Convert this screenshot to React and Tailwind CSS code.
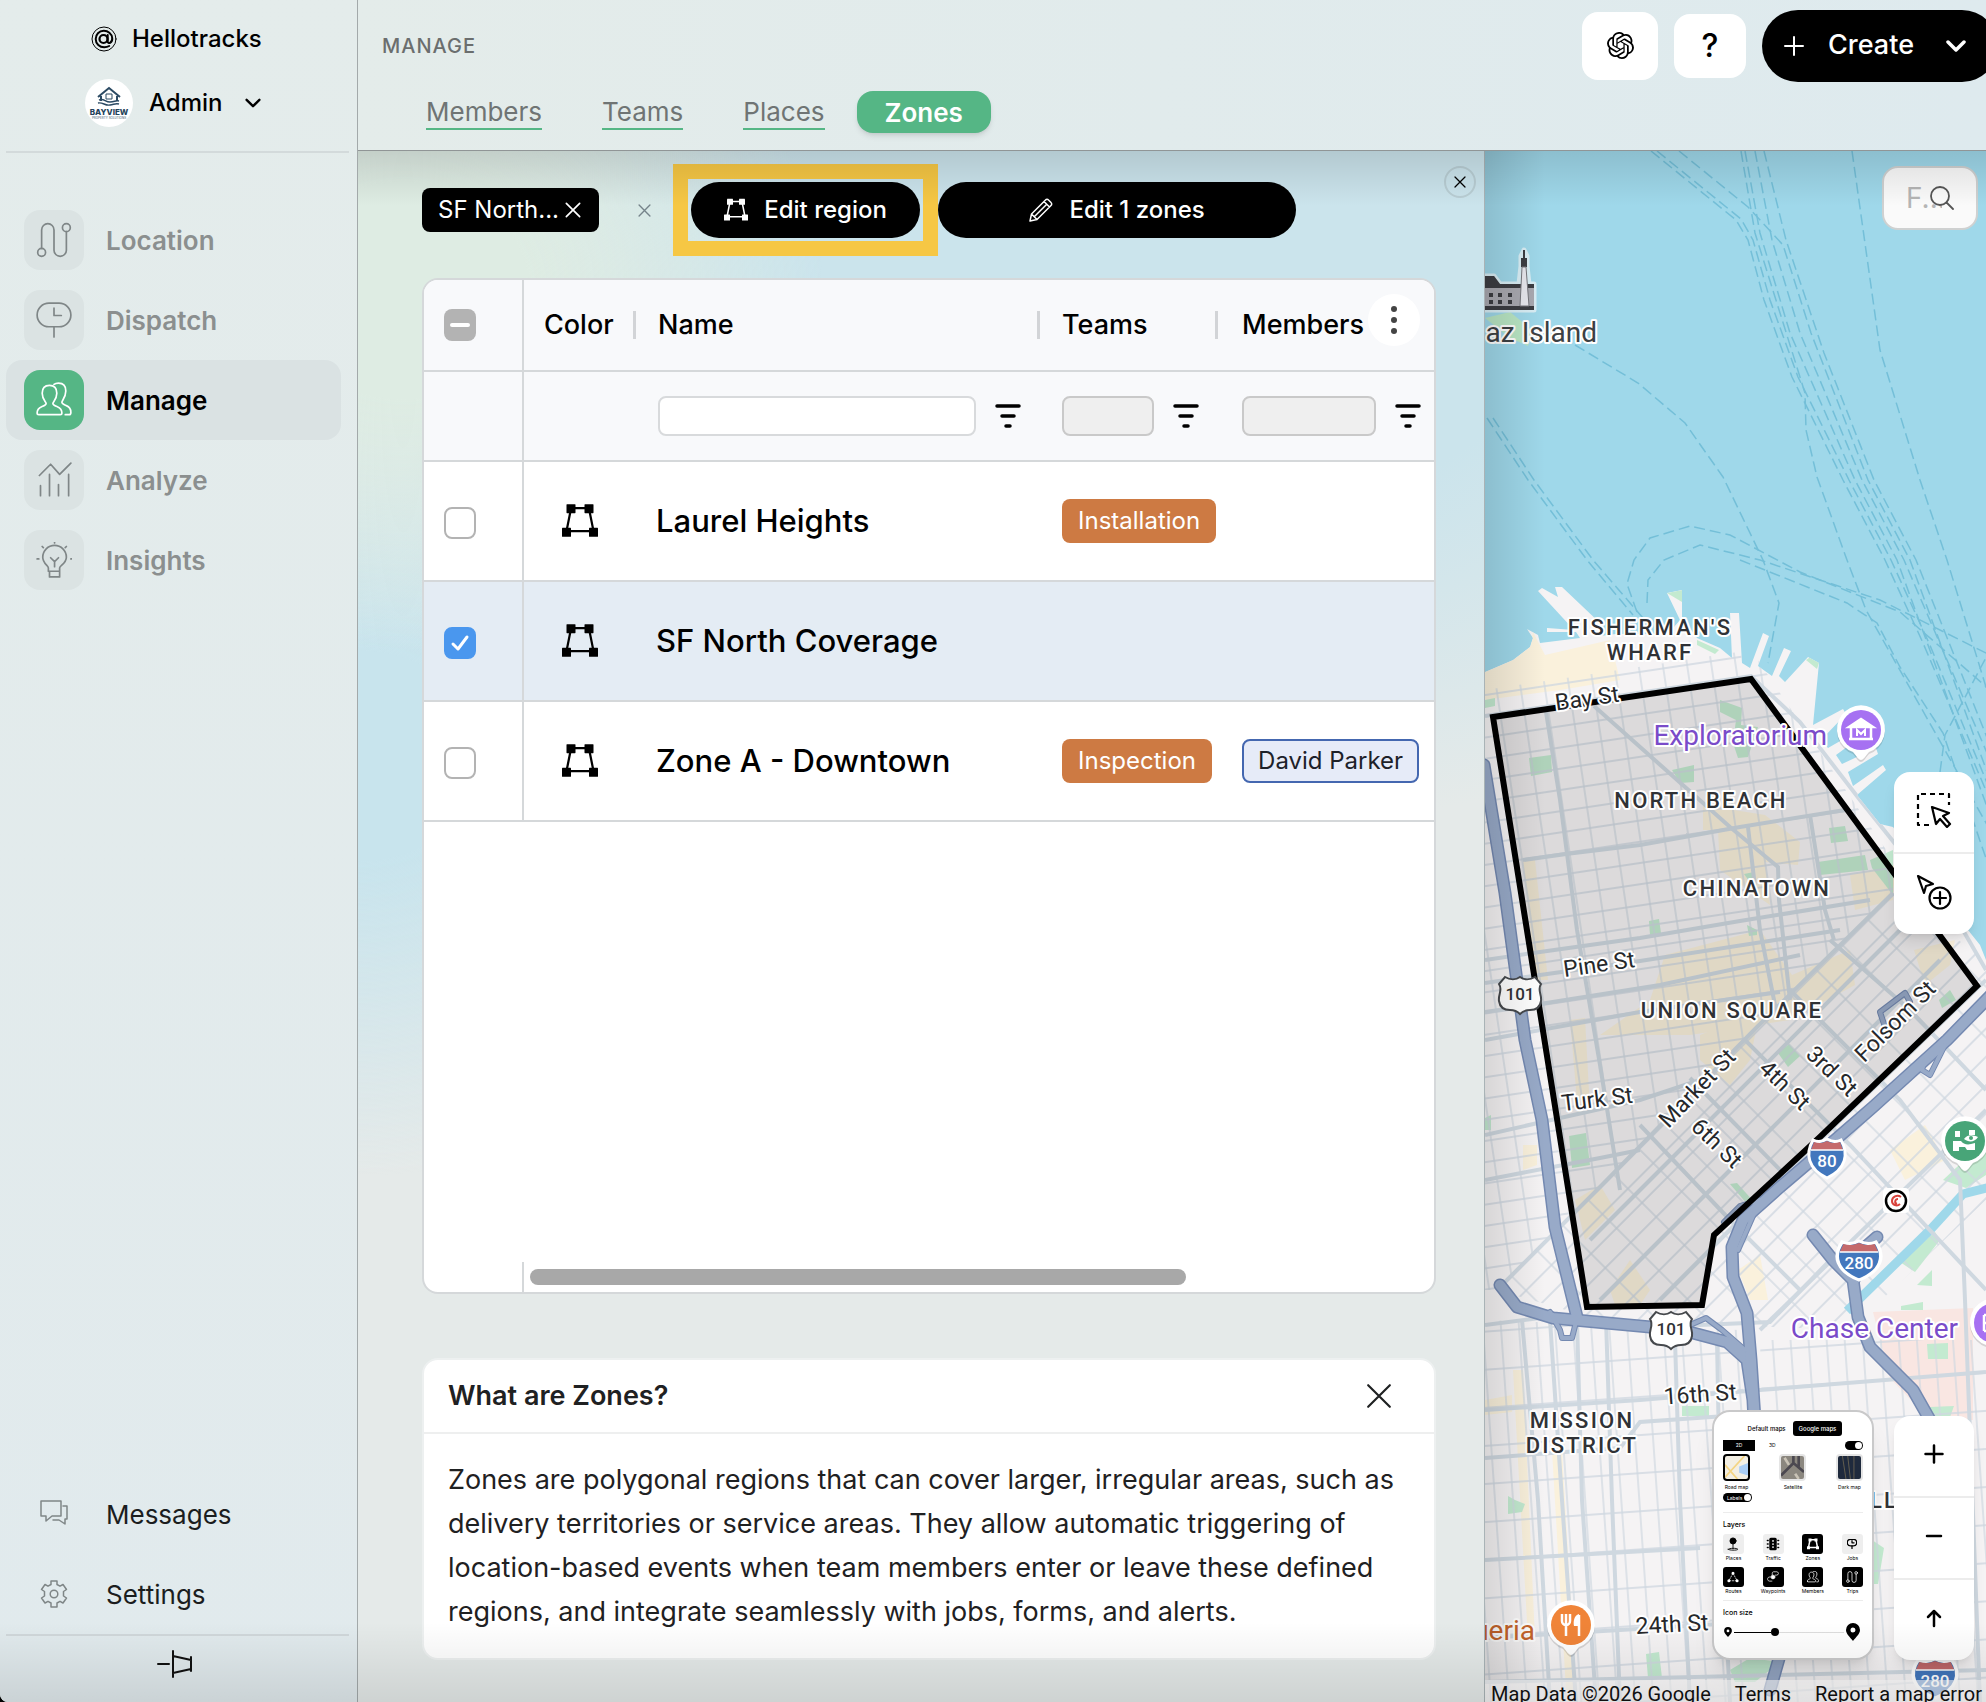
import { useState } from 'react'
import clsx from 'clsx'
import { SiOpenai } from 'react-icons/si'

const Icon = ({ children, className, viewBox = '0 0 32 32', width = 1.5 }) => (
  <svg
    viewBox={viewBox}
    className={className}
    fill="none"
    stroke="currentColor"
    strokeWidth={width}
    strokeLinecap="round"
    strokeLinejoin="round"
    aria-hidden="true"
  >
    {children}
  </svg>
)

const LocationIcon = ({ className = 'size-9', width = 1.5 }) => (
  <Icon className={className} width={width}>
    <circle cx="5" cy="27" r="3.5" />
    <circle cx="27" cy="5" r="3.5" />
    <path d="M5 23.500V7a5.500 5.500 0 0 1 11 0v18a5.500 5.500 0 0 0 11 0V8.500" />
  </Icon>
)

const DispatchIcon = ({ className = 'size-9', width = 1.5 }) => (
  <Icon className={className} width={width}>
    <rect x="1" y="1" width="30" height="21" rx="10.5" />
    <path d="M16 5.500V12h6.500M16 22v9" />
  </Icon>
)

const MembersIcon = ({ className = 'size-9', width = 1.5 }) => (
  <Icon className={className} width={width}>
    <path d="M1 27.500c0-3.500 1.500-4.500 4-5.500s4-1.500 4-3c0-1.400-3.500-3.500-3.500-9C5.500 5.500 8 3 12 3s6.500 2.500 6.500 7c0 5.500-3.500 7.600-3.500 9 0 1.500 1.500 2 4 3s4 2 4 5.500c0 1-.6 1.500-1.500 1.500h-19c-.9 0-1.500-.5-1.500-1.500z" />
    <path d="M16 2.200C17 1.300 18.400 1 20 1c4 0 6.500 2.500 6.500 7 0 5.500-3.500 8.600-3.500 10 0 1.500 1.500 2 4 3s4 2.500 4 6c0 1.200-.6 2-1.500 2H26" />
  </Icon>
)

const AnalyzeIcon = () => (
  <Icon className="size-9">
    <path d="M3 12l10-10 8 9L31 1M4 30V21M12 30V11M20 30V20M29 30V11" />
  </Icon>
)

const InsightsIcon = () => (
  <Icon className="size-9">
    <path d="M11 26v-3c0-2-5-4-5-9.500a10.500 10.500 0 0 1 21 0C27 19 21 21 21 23v3zM12 26v5h9v-5M16.500 22v-5M13 14l3.500 3.500L20 14" />
    <path d="M16.500 0v.8M1 15h1.500M31 15h.8M5.500 4l1 1M27 4l-1 1" />
  </Icon>
)

const ZoneIcon = ({ className, width = 1.5 }) => (
  <Icon className={className} width={width}>
    <path d="M9 4.500h13M6 25h20M8 5L4 25M24 5l4 20" />
    <g fill="currentColor" stroke="none">
      <rect x="4" y="1" width="8" height="8" rx="0.5" />
      <rect x="20" y="1" width="8" height="8" rx="0.5" />
      <rect x="0" y="22" width="8" height="8" rx="0.5" />
      <rect x="24" y="22" width="8" height="8" rx="0.5" />
    </g>
  </Icon>
)

const CloseIcon = ({ className, width = 2 }) => (
  <Icon className={className} width={width} viewBox="0 0 24 24">
    <path d="M2 2l20 20M22 2L2 22" />
  </Icon>
)

const FilterIcon = () => (
  <Icon className="h-[26px] w-7" width={3.5} viewBox="0 0 28 26">
    <path d="M3 3h22M8 13h12M12 23h4" />
  </Icon>
)

const ChevronIcon = ({ className, width = 3 }) => (
  <Icon className={className} width={width} viewBox="0 0 20 12">
    <path d="M2 2l8 8 8-8" />
  </Icon>
)

const navItems = [
  { name: 'Location', icon: <LocationIcon /> },
  { name: 'Dispatch', icon: <DispatchIcon /> },
  { name: 'Manage', icon: <MembersIcon />, active: true },
  { name: 'Analyze', icon: <AnalyzeIcon /> },
  { name: 'Insights', icon: <InsightsIcon /> },
]

const Sidebar = () => (
  <aside className="flex w-[358px] shrink-0 flex-col border-r border-[#a3a9aa] bg-linear-to-b from-[#e4eceb] to-[#e1eaed]">
    <div className="flex h-[151px] shrink-0 flex-col">
      <a href="#home" className="mt-[19px] ml-[91px] flex h-10 items-center gap-[15px] text-2xl font-medium text-black">
        <Icon className="size-[26px]" viewBox="0 0 26 26" width={1}>
          <circle cx="13" cy="13" r="12" />
          <circle cx="12.500" cy="13" r="4" strokeWidth="2.200" />
          <path d="M16.700 9v6.500c0 3 5 1.500 4.500-3.500C20.700 7.500 17 4.700 12.700 4.800 8 5 4.700 8.500 4.700 13c0 5 4 8.300 8.500 8.300 2 0 3.500-.4 5-1.300" strokeWidth="2" />
        </Icon>
        Hellotracks
      </a>
      <button className="mt-5 ml-[85px] flex h-12 w-44 items-center text-2xl font-medium text-black">
        <span className="flex size-12 items-center justify-center rounded-full bg-white">
          <svg viewBox="0 0 48 48" className="size-12" aria-hidden="true">
            <path d="M13 18l11-9 11 9M16 17v5M32 17v5M24 10v-1" fill="none" stroke="#2b4a63" strokeWidth="2" />
            <path d="M21 15h6v5h-6z" fill="none" stroke="#2b4a63" />
            <path d="M14 21c5-2 6 2 11 2s5-2 9-1M13 24c5-1 7 3 12 2s6-2 9-1" fill="none" stroke="#2b4a63" strokeWidth="1.500" />
            <text x="24" y="36" textAnchor="middle" fontSize="8" fontWeight="800" fill="#24425a">BAYVIEW</text>
            <text x="24" y="40" textAnchor="middle" fontSize="3" fontWeight="500" fill="#5b7384">PROPERTY SOLUTIONS</text>
          </svg>
        </span>
        <span className="ml-4 grow text-left">Admin</span>
        <ChevronIcon className="h-[10px] w-4" />
      </button>
    </div>
    <hr className="mr-2 ml-1.5 border-t-2 border-[#d3dadb]" />

    <nav className="mt-[47px] mr-4 ml-1.5 flex flex-col">
      {navItems.map((item) => (
        <a
          key={item.name}
          href={`#${item.name.toLowerCase()}`}
          className={clsx(
            'flex h-20 items-center gap-[22px] rounded-2xl pl-[18px] text-[26px] font-semibold',
            item.active ? 'bg-[#dae2e3] text-black' : 'text-[#8b8f8f]'
          )}
        >
          <span
            className={clsx(
              'flex size-[60px] items-center justify-center rounded-2xl',
              item.active ? 'bg-[#55b685] text-white' : 'bg-[#dbe3e3] text-[#7f8687]'
            )}
          >
            {item.icon}
          </span>
          {item.name}
        </a>
      ))}
    </nav>

    <div className="mt-auto flex flex-col text-[26px] text-[#1b1d1e]">
      <a href="#messages" className="flex h-20 items-center gap-[38px] pl-10">
        <Icon className="size-7 text-[#7f8687]" viewBox="0 0 28 28">
          <path d="M1 1h20v15H12l-6 5v-5H1zM23 6h4v13h-2v5l-6-4h-6" />
        </Icon>
        Messages
      </a>
      <a href="#settings" className="flex h-20 items-center gap-[38px] pl-10">
        <Icon className="size-7 text-[#7f8687]" viewBox="0 0 28 28">
          <circle cx="14" cy="14" r="3.800" />
          <path d="M11 1h6v3.500l3 1.700 3-1.700 3.500 5-3 2v4.500l3 2-3.500 5-3-1.700-3 1.700V27h-6v-4l-3-1.700L5 23l-3.500-5 3-2v-4.500l-3-2 3.500-5 3 1.700 3-1.700z" />
        </Icon>
        Settings
      </a>
    </div>
    <hr className="mr-2 ml-1.5 border-t-2 border-[#d0d7da]" />
    <button aria-label="Pin sidebar" className="flex h-[66px] items-start justify-center pt-3.5 pr-2 text-[#111]">
      <Icon className="h-7 w-9" viewBox="0 0 36 28" width={2}>
        <path d="M1 14h11M16 1v26M16 6l18 4M16 23l18-4M34 7v14" />
      </Icon>
    </button>
  </aside>
)

const tabs = ['Members', 'Teams', 'Places']

const Header = () => (
  <header className="relative z-20 flex h-[151px] shrink-0 items-start justify-between border-b border-[#a3a9aa] bg-linear-to-r from-[#e4ecea] to-[#deeaee]">
    <div className="flex flex-col">
      <h1 className="mt-8 ml-6 h-7 text-xl leading-7 font-medium tracking-wider text-[#6b6e6e]">MANAGE</h1>
      <nav className="mt-[30px] ml-[68px] flex h-11 items-center text-[26px] text-[#6f7474]">
        {tabs.map((tab) => (
          <a key={tab} href={`#${tab.toLowerCase()}`} className="mt-0.5 mr-[60px] border-b-2 border-[#55b685] leading-8 last-of-type:mr-8">
            {tab}
          </a>
        ))}
        <button aria-current="page" className="h-[42px] rounded-2xl bg-[#55b685] px-7 font-semibold text-white shadow-md">
          Zones
        </button>
      </nav>
    </div>
    <div className="-mr-3 flex h-[91px] items-center gap-4">
      <button aria-label="Ask assistant" className="flex h-[68px] w-[76px] items-center justify-center rounded-2xl bg-white">
        <SiOpenai className="size-[27px]" />
      </button>
      <button aria-label="Help" className="h-16 w-[72px] rounded-2xl bg-white text-[32px] font-medium">
        ?
      </button>
      <button className="flex h-[72px] items-center rounded-full bg-black pr-8 pl-[22px] text-[27px] font-medium text-white">
        <Icon className="mr-6 size-5" viewBox="0 0 20 20" width={2}>
          <path d="M1 10h18M10 1v18" />
        </Icon>
        Create
        <ChevronIcon className="ml-8 h-3 w-5" width={3.5} />
      </button>
    </div>
    <div className="pointer-events-none absolute inset-x-0 top-full h-14 bg-linear-to-b from-black/12 to-transparent" />
  </header>
)

const rows = [
  { id: 1, name: 'Laurel Heights', team: 'Installation' },
  { id: 2, name: 'SF North Coverage' },
  { id: 3, name: 'Zone A - Downtown', team: 'Inspection', member: 'David Parker' },
]

const ZonesTable = () => {
  const [selected, setSelected] = useState([2])

  const toggle = (id) =>
    setSelected(selected.includes(id) ? selected.filter((s) => s !== id) : [...selected, id])

  return (
    <div className="flex min-h-0 grow flex-col overflow-hidden rounded-2xl border-2 border-[#d5d8da] bg-white">
      <table className="w-full table-fixed border-separate border-spacing-0 text-left">
        <colgroup>
          <col className="w-[100px]" />
          <col className="w-[112px]" />
          <col />
          <col className="w-[178px]" />
          <col className="w-[216px]" />
        </colgroup>
        <thead className="bg-[#f8f9fb] text-[27px]">
          <tr className="h-[92px]">
            <th className="border-r-2 border-b-2 border-[#d5d8da] pl-5">
              <span className="relative block size-8">
                <input
                  type="checkbox"
                  aria-label="Select all zones"
                  className="block size-8 appearance-none rounded-lg bg-[#b3b3b3]"
                />
                <span className="pointer-events-none absolute inset-x-1.5 top-3.5 h-1 rounded-full bg-white" />
              </span>
            </th>
            {['Color', 'Name', 'Teams'].map((title) => (
              <th key={title} className={clsx('border-b-2 border-[#d5d8da] font-medium', title === 'Color' ? 'pl-5' : 'pl-[22px]')}>
                <span className="flex items-center justify-between">
                  {title}
                  <span className="h-7 w-[3px] bg-[#d2d4d7]" />
                </span>
              </th>
            ))}
            <th className="relative border-b-2 border-[#d5d8da] pl-6 font-medium">
              Members
              <button
                aria-label="Column menu"
                className="absolute top-3.5 right-3.5 flex size-[52px] items-center justify-center rounded-full bg-white"
              >
                <svg viewBox="0 0 6 28" className="h-7 w-1.5" fill="#444" aria-hidden="true">
                  <circle cx="3" cy="3" r="3" />
                  <circle cx="3" cy="14" r="3" />
                  <circle cx="3" cy="25" r="3" />
                </svg>
              </button>
            </th>
          </tr>
          <tr className="h-[90px]">
            <td className="border-r-2 border-b-2 border-[#d5d8da]" />
            <td className="border-b-2 border-[#d5d8da]" />
            {['name', 'teams', 'members'].map((field) => (
              <td key={field} className={clsx('border-b-2 border-[#d5d8da]', field === 'members' ? 'pr-3 pl-6' : 'pr-[18px] pl-[22px]')}>
                <span className="flex items-center gap-[18px]">
                  <input
                    aria-label={`Filter by ${field}`}
                    disabled={field !== 'name'}
                    className="h-10 min-w-0 grow rounded-lg border-2 border-[#d8dadc] bg-white px-2 disabled:border-[#c9c9c9] disabled:bg-[#efefef]"
                  />
                  <button aria-label={`Filter options for ${field}`}>
                    <FilterIcon />
                  </button>
                </span>
              </td>
            ))}
          </tr>
        </thead>
        <tbody>
          {rows.map((row) => {
            const isSelected = selected.includes(row.id)
            return (
              <tr key={row.id} className={clsx('h-[120px]', isSelected && 'bg-[#e4ecf4]')}>
                <td className="border-r-2 border-b-2 border-[#d5d8da] pt-1 pl-5">
                  <span className="relative block size-8">
                    <input
                      type="checkbox"
                      aria-label={`Select ${row.name}`}
                      checked={isSelected}
                      onChange={() => toggle(row.id)}
                      className="block size-8 appearance-none rounded-lg border-2 border-[#b3b3b3] bg-white checked:border-[#4a97ee] checked:bg-[#4a97ee]"
                    />
                    {isSelected && (
                      <Icon className="pointer-events-none absolute inset-0 size-8 text-white" width={3}>
                        <path d="M9 17l5 5 9-12" />
                      </Icon>
                    )}
                  </span>
                </td>
                <td className="border-b-2 border-[#d5d8da]">
                  <ZoneIcon className="mx-auto size-9" width={2} />
                </td>
                <td className="truncate border-b-2 border-[#d5d8da] pl-5 text-[31px] font-medium">{row.name}</td>
                <td className="border-b-2 border-[#d5d8da] pl-[22px] whitespace-nowrap">
                  {row.team && (
                    <span className="inline-flex h-11 items-center rounded-lg bg-[#cd7a43] px-4 text-2xl text-white">
                      {row.team}
                    </span>
                  )}
                </td>
                <td className="border-b-2 border-[#d5d8da] pl-6 whitespace-nowrap">
                  {row.member && (
                    <span className="inline-flex h-11 items-center rounded-lg border-2 border-[#4467b0] bg-[#e6ebf8] px-3.5 text-2xl text-[#1d2129]">
                      {row.member}
                    </span>
                  )}
                </td>
              </tr>
            )
          })}
        </tbody>
      </table>
      <div className="mt-auto flex h-[30px] shrink-0">
        <div className="w-[100px] shrink-0 border-r-2 border-[#d5d8da]" />
        <div className="flex grow items-center px-1.5">
          <div className="h-4 w-[73%] rounded-full bg-[#a8a8a8]" />
        </div>
      </div>
    </div>
  )
}

const ZonesPanel = () => (
  <section className="relative flex min-h-0 flex-col border-r border-[#a9b3b6] bg-[#e5eae9] bg-[radial-gradient(ellipse_420px_360px_at_4%_9%,#deece3_30%,transparent),radial-gradient(ellipse_500px_420px_at_0%_39%,#c8e4ed_25%,transparent),radial-gradient(ellipse_900px_560px_at_72%_8%,#cbe4ec_45%,transparent)] pr-12 pb-[42px] pl-16">
    <button
      aria-label="Close panel"
      className="absolute top-[15px] right-2 flex size-8 items-center justify-center rounded-full border-2 border-[#b9ced4]"
    >
      <CloseIcon className="size-3" width={2.5} />
    </button>
    <div className="mt-[13px] flex h-[92px] shrink-0 items-center">
      <span className="flex h-11 w-[177px] items-center justify-between rounded-lg bg-black pr-[18px] pl-4 text-2xl text-white">
        SF North...
        <button aria-label="Remove SF North Coverage">
          <CloseIcon className="size-4" width={2.5} />
        </button>
      </span>
      <button aria-label="Clear selection" className="mr-[22px] ml-auto text-[#75838a]">
        <CloseIcon className="size-[13px]" width={2.5} />
      </button>
      <div className="border-[15px] border-[#f6c744] p-[3px]">
        <button className="flex h-14 w-[229px] items-center justify-center gap-4 rounded-full bg-black text-2xl font-medium text-white">
          <ZoneIcon className="size-6" width={2} />
          Edit region
        </button>
      </div>
      <button className="mr-[140px] flex h-14 w-[358px] items-center justify-center gap-4 rounded-full bg-black text-2xl font-medium text-white">
        <Icon className="size-6" viewBox="0 0 24 24">
          <path d="M1 23l1.500-7L16.500 2a2 2 0 0 1 3 0L22 4.500a2 2 0 0 1 0 3L8 21.500zM2.500 16L8 21.500M15 3.500L20.500 9M5.500 18.500L17.500 6.500" />
        </Icon>
        Edit 1 zones
      </button>
    </div>
    <div className="mt-[22px] flex min-h-0 grow flex-col">
      <ZonesTable />
    </div>
    <article className="mt-16 shrink-0 rounded-2xl border-2 border-[#edf0f0] bg-white text-[#1f2122]">
      <div className="flex h-[74px] items-center justify-between border-b-2 border-[#eeefef] pr-[42px] pl-6">
        <h2 className="text-[27px] font-semibold">What are Zones?</h2>
        <button aria-label="Close help">
          <CloseIcon className="size-[26px]" width={2} />
        </button>
      </div>
      <p className="px-6 pt-6 pb-6 text-[27px] leading-[44px]">
        Zones are polygonal regions that can cover larger, irregular areas, such as delivery territories or service
        areas. They allow automatic triggering of location-based events when team members enter or leave these defined
        regions, and integrate seamlessly with jobs, forms, and alerts.
      </p>
    </article>
  </section>
)

const ferryRoutes = [
  'M1651 151L1736 220L1748 240L1764 300L1792 377L1843 480L1885 560L1923 643L1990 800',
  'M1657 151L1741 219L1753 240L1770 300L1798 377L1849 480L1891 560L1929 643L1990 790',
  'M1679 151L1748 207L1783 245L1811 333L1868 480L1910 560L1990 780',
  'M1741 151L1755 233L1805 393L1806 430L1817 477L1847 560L1866 610L1990 830',
  'M1745 151L1760 233L1790 333L1855 480L1897 560L1990 815',
  'M1755 151L1772 240L1800 333L1862 480L1904 560L1990 760',
  'M1764 151L1786 240L1824 353L1874 480L1916 560L1990 745',
  'M1852 151L1880 350L1920 480L1947 560L1990 700',
  'M1575 345L1638 383L1685 423L1723 477L1763 560L1779 603L1768 663',
  'M1487 418L1528 480L1587 560L1633 615',
  'M1493 418L1534 480L1593 560L1643 618',
  'M1740 560L1847 603L1877 623L1900 667L1943 733L1990 870',
  'M1647 603L1648 580L1664 560L1700 545L1760 560L1880 600L1990 655',
  'M1637 612L1627 584L1634 560L1650 538L1690 526L1730 535L1800 572L1900 612L1990 690',
  'M1940 772L1945 735L1990 650',
]

const majorStreets = [
  'M1485 716L1751 676L1800 722L1860 800L1960 925L1986 970',
  'M1546 712L1560 800L1577 930L1600 1065L1620 1190',
  'M1523 860L1566 854L1640 845L1740 827L1845 810',
  'M1594 706L1730 827L1778 867L1779 900L1790 1000',
  'M1748 827L1760 930L1776 1010',
  'M1810 815L1825 910L1834 940',
  'M1485 960L1540 952L1640 938L1740 921L1870 900',
  'M1485 983L1540 975L1640 961L1840 930',
  'M1485 1012L1540 1004L1660 985L1800 955',
  'M1485 1040L1640 1012L1780 992',
  'M1485 1135L1560 1118L1640 1100L1700 1080',
  'M1485 1180L1600 1158L1640 1150',
  'M1497 1290L1600 1187L1757 1027L1893 893',
  'M1640 1125L1730 1220L1800 1290',
  'M1690 1078L1790 1180',
  'M1745 1040L1850 1145L1986 1290',
  'M1790 990L1900 1100L1960 1180L1965 1300L1980 1702',
  'M1830 940L1910 1010L1986 1090',
  'M1590 1240L1720 1110L1850 980L1960 870',
  'M1600 1300L1760 1140L1940 960',
  'M1660 1300L1830 1130L1986 980',
  'M1760 1330L1986 1110',
  'M1485 1325L1540 1318L1700 1325L1770 1322L1840 1250',
  'M1485 1410L1640 1400L1760 1390L1986 1372',
  'M1485 1458L1620 1448L1640 1422L1740 1415',
  'M1485 1560L1700 1548M1485 1638L1720 1624M1485 1682L1986 1670',
  'M1522 1320L1538 1500L1550 1702M1550 1320L1562 1500L1576 1702',
  'M1577 1320L1582 1500L1596 1702M1606 1320L1612 1500L1620 1702',
  'M1675 1340L1680 1500L1690 1702M1717 1340L1720 1500L1730 1702',
]

const freeways = [
  'M1484 765L1505 893L1525 1040L1542 1120L1555 1227L1577 1317',
  'M1500 1285L1517 1307L1553 1318L1650 1327L1693 1333L1727 1342L1747 1360L1753 1400L1758 1500L1790 1620L1770 1690',
  'M1990 996L1947 1040L1873 1107L1827 1147L1780 1187L1743 1220L1732 1247L1733 1277L1747 1313L1751 1360L1755 1420',
  'M1813 1235L1833 1260L1853 1280L1858 1317L1870 1347L1913 1390L1930 1420L1940 1500',
  'M1877 1237L1862 1250L1854 1280',
]

const ramps = [
  'M1550 1312L1560 1330L1562 1338L1572 1338L1576 1322',
  'M1690 1325L1706 1318L1722 1330L1745 1350',
  'M1724 1222L1740 1206L1760 1200L1738 1250',
  'M1925 1060L1945 1045L1930 1075L1922 1070Z',
  'M1886 1030L1880 1012L1905 993L1910 1002',
]

const parks = [
  'M1529 758L1551 755L1552 772L1531 776Z',
  'M1720 700L1742 708L1741 725L1758 727L1748 757L1738 758L1733 743L1736 720L1720 712Z',
  'M1672 770L1694 765L1694 782L1680 783Z',
  'M1829 828L1845 826L1848 841L1831 843Z',
  'M1818 862L1865 855L1868 870L1820 875Z',
  'M1870 860L1893 850V895L1872 868Z',
  'M1744 874L1754 872L1752 885Z',
  'M1649 921L1659 919L1661 933L1650 935Z',
  'M1747 925L1757 930L1757 935L1749 936Z',
  'M1569 1136L1586 1133L1590 1165L1572 1168Z',
  'M1778 1053L1789 1044L1800 1056L1788 1067Z',
  'M1730 1184L1737 1183L1755 1203L1748 1205Z',
  'M1939 1000L1950 990L1956 1000L1942 1008Z',
  'M1485 700L1495 698L1495 706L1485 708Z',
  'M1667 593L1682 590L1682 602Z',
  'M1697 640L1719 650L1715 654L1697 645Z',
  'M1806 660L1812 656L1819 663L1817 669Z',
  'M1943 1180L1986 1140V1175L1966 1188Z',
  'M1900 1262L1935 1232L1940 1240L1915 1272Z',
  'M1917 1285L1932 1270L1932 1286Z',
  'M1901 1306L1923 1302V1310H1901Z',
  'M1927 1344L1948 1343V1359H1928Z',
  'M1682 1406H1709V1416H1682Z',
  'M1508 1496L1515 1500L1525 1504L1522 1512L1508 1514Z',
  'M1646 1654L1659 1652L1662 1678H1648Z',
  'M1730 1670L1750 1658L1780 1662L1755 1682H1735Z',
  'M1872 1540L1884 1548L1878 1584L1870 1584Z',
  'M1485 1118L1491 1115V1130H1485Z',
  'M1930 1407L1954 1406L1950 1417H1930Z',
]

const commercial = [
  'M1485 672L1513 660L1530 647L1533 632L1545 655L1610 640L1620 680L1560 690L1485 700Z',
  'M1703 805L1765 815L1800 842L1798 865L1765 862L1770 905L1720 870L1718 830L1703 830Z',
  'M1665 955L1760 930L1792 975L1850 950L1855 985L1790 1020L1690 1035L1600 1035L1650 1000Z',
  'M1850 875L1895 865L1893 900L1855 910Z',
  'M1914 950L1955 940L1950 965L1925 985Z',
  'M1700 1035L1760 1010L1750 1060L1730 1085L1700 1060Z',
  'M1523 860L1535 860L1548 980L1536 980Z',
  'M1570 1020L1585 1018L1590 1110L1578 1112Z',
  'M1575 1200L1600 1185L1615 1210L1585 1240Z',
  'M1610 1290L1630 1260L1650 1290L1640 1305H1615Z',
  'M1738 1270L1760 1255L1768 1300L1750 1300Z',
  'M1890 1150L1925 1125L1945 1160L1905 1180Z',
  'M1513 1370H1523L1535 1640H1528Z',
  'M1552 1450H1562L1576 1690H1566Z',
  'M1523 1145H1537V1165L1523 1170Z',
  'M1485 1400L1512 1395V1412L1485 1415Z',
]

const areaLabels = [
  { text: "FISHERMAN'S", x: 1650, y: 635 },
  { text: 'WHARF', x: 1650, y: 660 },
  { text: 'NORTH BEACH', x: 1701, y: 808 },
  { text: 'CHINATOWN', x: 1757, y: 896 },
  { text: 'UNION SQUARE', x: 1732, y: 1018 },
  { text: 'MISSION', x: 1582, y: 1428 },
  { text: 'DISTRICT', x: 1582, y: 1453 },
]

const streetLabels = [
  { text: 'Bay St', x: 1587, y: 698, turn: -8 },
  { text: 'Pine St', x: 1599, y: 964, turn: -8 },
  { text: 'Turk St', x: 1597, y: 1099, turn: -7 },
  { text: 'Market St', x: 1697, y: 1088, turn: -46 },
  { text: '6th St', x: 1717, y: 1143, turn: 44 },
  { text: '4th St', x: 1785, y: 1085, turn: 44 },
  { text: '3rd St', x: 1832, y: 1071, turn: 44 },
  { text: 'Folsom St', x: 1895, y: 1021, turn: -45 },
  { text: '16th St', x: 1700, y: 1394, turn: -4 },
  { text: '24th St', x: 1672, y: 1624, turn: -3 },
]

const Pin = ({ x, y, color, children }) => (
  <g transform={`translate(${x} ${y})`}>
    <path d="M0 30c-2 0-4-3-8-8A24 24 0 1 1 8 22c-4 5-6 8-8 8z" fill="#0002" transform="translate(0 2)" />
    <path d="M0 30c-2 0-4-3-8-8A24 24 0 1 1 8 22c-4 5-6 8-8 8z" fill="#fff" />
    <circle r="20" fill={color} />
    {children}
  </g>
)

const UsShield = ({ x, y }) => (
  <g transform={`translate(${x} ${y})`}>
    <path
      d="M-15-17C-10-14-4-14 0-17c4 3 10 3 15 0l6 7c-4 6 1 10 0 17-1 7-6 9-11 9-4 0-7 1-10 4-3-3-6-4-10-4-5 0-10-2-11-9-1-7 4-11 0-17z"
      fill="#fff"
      stroke="#45484c"
      strokeWidth="2"
    />
    <text y="6" textAnchor="middle" fontSize="17" fontWeight="500" fill="#303236">101</text>
  </g>
)

const Interstate = ({ x, y, wide, children }) => (
  <g transform={`translate(${x} ${y})`}>
    <g transform={wide ? 'scale(1.2 1)' : undefined}>
      <path d="M-14-18c5 3 9 2 14-1 5 3 9 4 14 1 8 14 5 29-14 38-19-9-22-24-14-38z" fill="#4277bd" stroke="#fff" strokeWidth="3" />
      <path d="M-13-16c5 2 9 1 13-1 4 2 8 3 13 1l3 8h-32z" fill="#c56a6c" />
      <path d="M-16-8h32" stroke="#fff" strokeWidth="1.500" />
    </g>
    <text y="9" textAnchor="middle" fontSize="17" fontWeight="500" fill="#fff">{children}</text>
  </g>
)

const CityMap = () => (
  <svg
    viewBox="1485 151 501 1551"
    preserveAspectRatio="xMinYMin slice"
    className="absolute inset-0 size-full font-['Roboto',sans-serif]"
    role="img"
    aria-label="Map of San Francisco"
  >
    <defs>
      <pattern id="north" width="24" height="21" patternUnits="userSpaceOnUse" patternTransform="rotate(-8.500 1500 800)">
        <path d="M0 1H24M1 0V21" stroke="#cfd8e1" strokeWidth="1.300" />
      </pattern>
      <pattern id="soma" width="36" height="20" patternUnits="userSpaceOnUse" patternTransform="rotate(-45 1700 1200)">
        <path d="M0 1H36M1 0V20" stroke="#cfd8e1" strokeWidth="1.300" />
      </pattern>
      <pattern id="mission" width="18" height="38" patternUnits="userSpaceOnUse" patternTransform="rotate(-4 1500 1500)">
        <path d="M0 1H18M1 0V38" stroke="#cfd8e1" strokeWidth="1.300" />
      </pattern>
      <clipPath id="land">
        <path d="M1480 674L1513 660L1530 647L1533 638L1527 629L1538 635L1540 643L1580 638L1576 632L1547 632V628L1574 630L1538 591L1542 588L1558 597L1555 587L1562 587L1601 624L1600 636L1616 634L1668 634L1680 620L1667 593L1682 590L1682 617L1697 638L1720 648L1732 658L1730 613L1739 613L1742 663L1750 668L1763 633L1769 636L1758 666L1772 676L1784 648L1791 651L1779 676L1785 682L1808 657L1819 663L1813 725L1843 709L1846 714L1821 740L1828 748L1868 725L1870 730L1836 755L1842 764L1876 748L1878 754L1848 772L1853 786L1883 765L1886 770L1857 795L1880 824L1893 827L1960 920L1980 945L1990 970V1710H1480Z" />
      </clipPath>
      <linearGradient id="edge" x1="0" x2="1" y1="0" y2="0">
        <stop offset="0" stopColor="#000" stopOpacity="0.12" />
        <stop offset="1" stopColor="#000" stopOpacity="0" />
      </linearGradient>
    </defs>

    <rect x="1485" y="151" width="501" height="1551" fill="#9fd8ea" />
    <g fill="none" stroke="#74bfd8" strokeWidth="1.500" strokeDasharray="11 5">
      {ferryRoutes.map((d) => (
        <path key={d} d={d} />
      ))}
    </g>

    <g clipPath="url(#land)">
      <rect x="1480" y="560" width="510" height="1150" fill="#f5f3f4" />
      <path d="M1873 1312L1973 1308V1420H1930L1890 1378Z" fill="#f9e6e2" />
      <g fill="#faf1dc">
        {commercial.map((d) => (
          <path key={d} d={d} />
        ))}
      </g>
      <g fill="#c3ead0">
        {parks.map((d) => (
          <path key={d} d={d} />
        ))}
      </g>
      <path d="M1485 690L1751 650L1893 860L1893 893L1497 1290L1485 1290Z" fill="url(#north)" />
      <path d="M1893 893L1986 960V1200L1850 1330L1600 1320L1497 1290Z" fill="url(#soma)" />
      <path d="M1485 1320L1740 1330L1760 1702H1485Z" fill="url(#mission)" />
      <path d="M1760 1340H1990V1702H1770Z" fill="url(#mission)" />
      <path d="M1990 1187L1963 1194L1930 1230L1847 1311" fill="none" stroke="#9fd8ea" strokeWidth="9" />
      <g fill="none" stroke="#cfd8e0" strokeWidth="4">
        {majorStreets.map((d) => (
          <path key={d} d={d} />
        ))}
      </g>
      <g fill="none" strokeLinejoin="round" strokeLinecap="round">
        <g stroke="#7489b1" strokeWidth="6">
          {ramps.map((d) => (
            <path key={d} d={d} />
          ))}
        </g>
        <g stroke="#7489b1" strokeWidth="13">
          {freeways.map((d) => (
            <path key={d} d={d} />
          ))}
        </g>
        <g stroke="#98aac8" strokeWidth="10">
          {freeways.map((d) => (
            <path key={d} d={d} />
          ))}
        </g>
        <g stroke="#98aac8" strokeWidth="4">
          {ramps.map((d) => (
            <path key={d} d={d} />
          ))}
        </g>
      </g>
    </g>

    <path
      d="M1493 717L1751 679L1977 986L1820 1137L1714 1235L1702 1305L1587 1307Z"
      fill="#000"
      fillOpacity="0.1"
      stroke="#000"
      strokeWidth="6"
    />

    <path d="M1485 318L1510 312L1532 330L1528 346L1510 338Z" fill="#b9e6c4" />
    <g stroke="#d9eef5" strokeWidth="5" strokeLinejoin="round" fill="#d9eef5">
      <path d="M1485 276L1494 276L1500 284H1519L1521 266V256L1524 250L1527 256V266L1529 284H1534V310H1485Z" />
    </g>
    <path d="M1485 276h9l6 8h34v26h-49z" fill="#a9a9b0" />
    <path d="M1485 276h9l6 8h34v4h-49zM1485 306h49v4h-49zM1521 258h6v9h-6zM1523 250h2v8h-2z" fill="#3c3d42" />
    <path d="M1522 267h4l3 39h-9z" fill="#e8e8ee" stroke="#77777d" />
    <path d="M1489 293h4v4h-4zM1498 293h4v4h-4zM1508 293h4v4h-4zM1489 300h4v4h-4zM1498 300h4v4h-4zM1508 300h4v4h-4z" fill="#3c3d42" />

    <g stroke="#fff" strokeWidth="4" strokeLinejoin="round" paintOrder="stroke">
      <text x="1597" y="342" textAnchor="end" fontSize="28" fill="#3c4043">az Island</text>
      <g fontSize="22" fontWeight="500" fill="#303236" textAnchor="middle" className="tracking-widest">
        {areaLabels.map((label) => (
          <text key={label.text} x={label.x} y={label.y}>{label.text}</text>
        ))}
        <text x="1884" y="1508">LL</text>
      </g>
      <g fontSize="23" fill="#26282b" textAnchor="middle">
        {streetLabels.map((label) => (
          <text key={label.text} transform={`translate(${label.x} ${label.y}) rotate(${label.turn})`} y="8">
            {label.text}
          </text>
        ))}
      </g>
      <g fontSize="28" fill="#7a4bc9" textAnchor="end">
        <text x="1827" y="745">Exploratorium</text>
        <text x="1958" y="1338">Chase Center</text>
        <text x="1535" y="1640" fill="#c5642b">ueria</text>
      </g>
    </g>

    <UsShield x={1520} y={994} />
    <UsShield x={1671} y={1329} />
    <Interstate x={1827} y={1158}>80</Interstate>
    <Interstate x={1859} y={1260} wide>280</Interstate>
    <Interstate x={1935} y={1678} wide>280</Interstate>

    <rect x="1883" y="1188" width="26" height="25" rx="4" fill="#fff" />
    <circle cx="1896" cy="1201" r="10" fill="#fff" stroke="#000" strokeWidth="2.500" />
    <path d="M1901 1197c-4-3-9 0-9 4s5 6 8 3M1898 1199c-3 0-4 4-1 5" fill="none" stroke="#d8413b" strokeWidth="2" />

    <Pin x={1861} y={730} color="#a671f2">
      <path d="M-10-3v11M10-3v11M-12 9h24M-12-3h24L0-11z" fill="none" stroke="#fff" strokeWidth="2.500" />
      <path d="M-12-3L0-11 12-3z" fill="#fff" />
      <path d="M-4 6V0l4 4 4-4v6" fill="none" stroke="#fff" strokeWidth="2" />
    </Pin>
    <Pin x={1965} y={1141} color="#48a578">
      <path d="M-12 0h8c2 3 6 4 10 3l4-1v7H2l-2-3h-6v4h-6z" fill="#fff" />
      <path d="M-1-2c4-5 9-4 14-2-3 5-9 6-14 2zM-10-10h5v6h-5zM4-11h6v5H4z" fill="#fff" />
      <circle cx="6" cy="-3" r="2" fill="#48a578" />
    </Pin>
    <Pin x={1994} y={1323} color="#a671f2">
      <path d="M-10-8h6M-10-8V8M-10 8h6M-10 0h5" stroke="#fff" strokeWidth="2.500" />
    </Pin>
    <Pin x={1571} y={1625} color="#f08438">
      <path d="M-9-11v7a4 4 0 0 0 8 0v-7M-5-11v22M8-10v21" fill="none" stroke="#fff" strokeWidth="2.500" />
      <path d="M8-11c-5 1-6 8-5 12h5z" fill="#fff" />
    </Pin>

    <rect x="1485" y="151" width="60" height="1551" fill="url(#edge)" />
  </svg>
)

const BigPin = ({ className }) => (
  <svg viewBox="0 0 14 18" className={className} aria-hidden="true">
    <path d="M7 0a7 7 0 0 1 7 7c0 4-4 7-7 11C4 14 0 11 0 7a7 7 0 0 1 7-7zm0 4.500a2.500 2.500 0 1 0 0 5 2.500 2.500 0 0 0 0-5z" />
  </svg>
)

const layers = [
  {
    name: 'Places',
    icon: (
      <Icon className="size-3.5" width={2}>
        <circle cx="16" cy="9" r="7" fill="currentColor" />
        <path d="M16 15v12M5 28c0-3 22-3 22 0s-22 3-22 0z" />
      </Icon>
    ),
  },
  {
    name: 'Traffic',
    icon: (
      <Icon className="size-3.5" width={3}>
        <rect x="9" y="3" width="14" height="26" rx="2" fill="currentColor" />
        <path d="M3 8h2M27 8h2M3 16h2M27 16h2M3 24h2M27 24h2" />
        <path d="M16 9v.1M16 16v.1M16 23v.1" stroke="#fff" strokeWidth="4" />
      </Icon>
    ),
  },
  { name: 'Zones', on: true, icon: <ZoneIcon className="size-3" width={4} /> },
  { name: 'Jobs', icon: <DispatchIcon className="size-2.5" width={4} /> },
  {
    name: 'Routes',
    on: true,
    icon: (
      <Icon className="size-3" width={2}>
        <path d="M16 6L5 26h22z" strokeDasharray="4 4" />
        <path d="M16 6v.1M5 26v.1M27 26v.1" strokeWidth="8" />
      </Icon>
    ),
  },
  {
    name: 'Waypoints',
    on: true,
    icon: (
      <Icon className="size-3" width={2}>
        <path d="M14 10V6a4 4 0 0 1 4-4h8a4 4 0 0 1 0 9h-4M10 16H7a5 5 0 0 0 0 11h6" strokeDasharray="6 2" />
        <circle cx="16" cy="16" r="5" fill="currentColor" />
      </Icon>
    ),
  },
  { name: 'Members', on: true, icon: <MembersIcon className="size-3" width={2} /> },
  { name: 'Trips', on: true, icon: <LocationIcon className="size-3" width={2} /> },
]

const LayersCard = () => (
  <div className="absolute right-[112px] bottom-[42px] h-[250px] w-[162px] rounded-[18px] border-2 border-[#c9c9ca] bg-white px-[9px] pt-[9px] text-[6px] leading-2 text-black shadow-xl">
    <div className="flex items-center justify-center gap-[7px] pl-1 font-medium">
      <button>Default maps</button>
      <button className="h-[15px] rounded-[3px] bg-black px-[6px] text-white">Google maps</button>
    </div>
    <div className="mt-[3px] flex h-3 items-center text-[5px]">
      <button className="h-[11px] w-8 bg-black text-white">2D</button>
      <button className="ml-3.5">3D</button>
      <span className="ml-auto flex h-[9px] w-[18px] items-center justify-end rounded-full bg-black pr-px">
        <span className="size-[7px] rounded-full bg-white" />
      </span>
    </div>
    <div className="mt-[3px] flex justify-between text-[5px]">
      <button className="flex flex-col items-center">
        <svg viewBox="0 0 26 26" className="size-[27px] rounded-[4px] border-2 border-black bg-[#f3efe4]" aria-hidden="true">
          <path d="M16 12l10-4v14l-10-3z" fill="#a9cdf5" />
          <path d="M0 24L22 0M0 10l14 16" stroke="#f4d583" strokeWidth="2" />
        </svg>
        <span className="mt-0.5">Road map</span>
      </button>
      <button className="flex flex-col items-center">
        <svg viewBox="0 0 26 26" className="size-[27px] rounded-[4px] border-2 border-[#e5e5e5] bg-[#8b877f]" aria-hidden="true">
          <path d="M0 22L14 8V0M14 8l12 10M20 0v12" fill="none" stroke="#4b4850" strokeWidth="3" />
          <path d="M4 2l5 8M16 20l4 6" stroke="#c9c3b6" strokeWidth="3" />
        </svg>
        <span className="mt-0.5">Satellite</span>
      </button>
      <button className="flex flex-col items-center">
        <svg viewBox="0 0 26 26" className="size-[27px] rounded-[4px] border-2 border-[#e5e5e5] bg-[#1f2a3d]" aria-hidden="true">
          <path d="M5 0l4 26M11 0l3 26M18 0v26" stroke="#6b6450" />
        </svg>
        <span className="mt-0.5">Dark map</span>
      </button>
    </div>
    <label className="mt-0.5 flex h-[9px] w-[29px] items-center justify-between rounded-full bg-black pr-px pl-1 text-[5px] text-white">
      Labels
      <span className="size-[7px] rounded-full bg-white" />
    </label>
    <hr className="mt-2.5 border-[#ececec]" />
    <h3 className="mt-2 text-[7px] leading-2 font-medium">Layers</h3>
    <div className="mt-[5px] flex flex-wrap justify-between gap-y-[5px]">
      {layers.map((layer) => (
        <button key={layer.name} className="mr-[17px] flex w-[21px] flex-col items-center text-[5px] nth-[4n]:mr-0">
          <span className={clsx('flex h-5 w-[21px] items-center justify-center rounded-[3px]', layer.on ? 'bg-black text-white' : 'bg-[#eee]')}>
            {layer.icon}
          </span>
          <span className="leading-2 whitespace-nowrap">{layer.name}</span>
        </button>
      ))}
    </div>
    <hr className="mt-[5px] border-[#ececec]" />
    <h3 className="mt-2 text-[7px] leading-2 font-medium">Icon size</h3>
    <div className="mt-1.5 flex items-center gap-0.5">
      <BigPin className="ml-px h-2.5 w-2" />
      <div className="flex grow items-center">
        <span className="h-px w-[34%] bg-black" />
        <span className="size-2 rounded-full bg-black" />
        <span className="h-px grow bg-[#ddd]" />
      </div>
      <BigPin className="mr-[3px] h-[18px] w-3.5" />
    </div>
  </div>
)

const MapView = () => (
  <section className="relative overflow-hidden">
    <CityMap />

    <label className="absolute top-[15px] right-2 flex h-16 w-24 items-center rounded-2xl border-2 border-[#cfd1d1] bg-[#fafafa] px-[22px]">
      <input aria-label="Find" placeholder="F..." className="w-10 min-w-0 bg-transparent text-[28px] outline-none placeholder:text-[#b5b5b5]" />
      <Icon className="-ml-3 size-6 shrink-0 text-[#555]" viewBox="0 0 24 24" width={1.8}>
        <circle cx="10" cy="10" r="9" />
        <path d="M16.500 16.500L23 23" />
      </Icon>
    </label>

    <div className="absolute top-[621px] right-3 flex w-20 flex-col divide-y-2 divide-[#ececec] rounded-2xl bg-white shadow-lg">
      <button aria-label="Select area" className="flex h-[82px] items-center justify-center pb-1">
        <Icon className="size-9" viewBox="0 0 36 36" width={2.2}>
          <path d="M13 33H2V2h31v11" strokeDasharray="5 4" strokeLinecap="butt" />
          <path d="M16 15l17 6-6 3 7 8-3 3-7-8-4 5z" />
        </Icon>
      </button>
      <button aria-label="Add point" className="flex h-20 items-center justify-center pb-1">
        <Icon className="size-9" viewBox="0 0 36 36" width={2.2}>
          <path d="M2 2l15 8-7 2-2 7z" />
          <circle cx="24" cy="24" r="10.500" />
          <path d="M24 18v12M18 24h12" />
        </Icon>
      </button>
    </div>

    <LayersCard />

    <div className="absolute right-3 bottom-[42px] flex w-20 flex-col divide-y-2 divide-[#ececec] rounded-2xl bg-white shadow-lg">
      <button aria-label="Zoom in" className="flex h-[82px] items-center justify-center pb-1">
        <Icon className="size-5" viewBox="0 0 20 20" width={2.5}>
          <path d="M1.500 10h17M10 1.500v17" />
        </Icon>
      </button>
      <button aria-label="Zoom out" className="flex h-[82px] items-center justify-center pb-1">
        <Icon className="size-5" viewBox="0 0 20 20" width={2.5}>
          <path d="M3 10h14" />
        </Icon>
      </button>
      <button aria-label="Reset north" className="flex h-20 items-center justify-center pb-1">
        <Icon className="size-5" viewBox="0 0 20 20" width={2.5}>
          <path d="M10 18V3M4 9l6-6 6 6" />
        </Icon>
      </button>
    </div>

    <footer className="absolute inset-x-0 bottom-0 flex h-[22px] gap-6 overflow-hidden bg-white/60 pt-0.5 pl-1.5 font-['Roboto',sans-serif] text-xl leading-6 whitespace-nowrap text-[#111]">
      <span>Map Data ©2026 Google</span>
      <a href="#terms">Terms</a>
      <a href="#report">Report a map error</a>
    </footer>
  </section>
)

export default function App() {
  return (
    <div className="h-screen bg-black">
      <div className="relative flex h-full overflow-hidden rounded-bl-lg bg-[#e4eceb] font-['Inter',sans-serif] text-black">
        <Sidebar />
        <main className="flex min-w-0 grow flex-col">
          <Header />
          <div className="grid min-h-0 grow grid-cols-[minmax(0,9fr)_minmax(0,4fr)]">
            <ZonesPanel />
            <MapView />
          </div>
        </main>
        <div className="pointer-events-none absolute inset-x-0 bottom-0 z-30 h-20 bg-linear-to-t from-black/10 to-transparent" />
      </div>
    </div>
  )
}
